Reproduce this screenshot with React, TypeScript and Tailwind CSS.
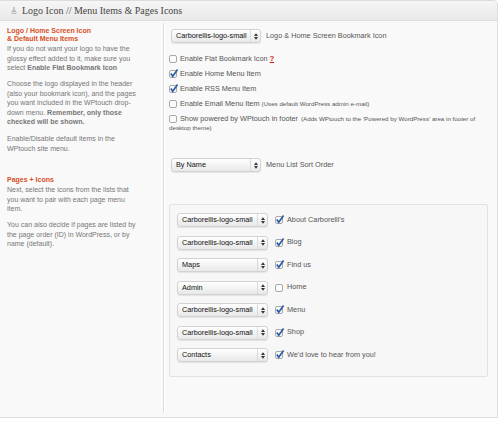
import React from "react";

function Select({ value, className }: { value: string; className: string }) {
  return (
    <div
      className={
        "flex h-[14px] shrink-0 items-center rounded-[3px] border border-[#d2d2d2] bg-linear-to-b from-white to-[#e8e8e8] shadow-[0_1px_1px_rgba(0,0,0,0.08)] " +
        className
      }
    >
      <span className="flex-1 truncate pl-[4px] text-[7.3px] leading-none text-[#111]">{value}</span>
      <span className="flex h-full w-[10px] items-center justify-center border-l border-[#dadada]">
        <svg width="4" height="7" viewBox="0 0 4 7">
          <path d="M0 3 L2 0.3 L4 3 Z M0 4 L2 6.7 L4 4 Z" fill="#333" />
        </svg>
      </span>
    </div>
  );
}

function Check({ on }: { on?: boolean }) {
  return (
    <svg width="10" height="10" viewBox="0 0 10 10" className="inline-block shrink-0 align-[-2px]">
      <rect x="0.5" y="1.5" width="7" height="7" rx="1.5" fill="#fbfbfb" stroke="#a9a9a9" />
      {on && <path d="M1.8 4.6 L3.7 7.2 L8.6 0.6" fill="none" stroke="#2c5da8" strokeWidth="1.7" />}
    </svg>
  );
}

const pages: [string, boolean, string][] = [
  ["Carborellis-logo-small", true, "About Carborelli's"],
  ["Carborellis-logo-small", true, "Blog"],
  ["Maps", true, "Find us"],
  ["Admin", false, "Home"],
  ["Carborellis-logo-small", true, "Menu"],
  ["Carborellis-logo-small", true, "Shop"],
  ["Contacts", true, "We'd love to hear from you!"],
];

export default function App() {
  return (
    <div className="h-[423px] w-[500px] overflow-hidden bg-white font-['Liberation_Sans',Arial,sans-serif]">
      <div className="flex h-[418px] w-[498px] flex-col rounded-tr-[5px] border-t border-r border-b border-[#dcdcdc] bg-[#f9f9f9]">
        {/* Header */}
        <div className="flex h-[20px] shrink-0 items-center gap-[5px] rounded-tr-[5px] border-b border-[#dfdfdf] bg-linear-to-b from-[#f6f6f6] to-[#e9e9e9] pl-[11px]">
          <svg width="6" height="7" viewBox="0 0 6 7">
            <path d="M2.3 0 h1.4 v2.6 L5.6 5 Q6 7 3 7 Q0 7 0.4 5 L2.3 2.6 Z" fill="#b9b9b9" />
            <rect x="1.4" y="5" width="3.2" height="1" fill="#efefef" />
          </svg>
          <span className="font-['Liberation_Serif',Georgia,serif] text-[10px] text-[#464646]">
            Logo Icon // Menu Items &amp; Pages Icons
          </span>
        </div>

        <div className="flex flex-1">
          {/* Left column */}
          <div className="mt-[2px] mb-[4px] w-[164px] shrink-0 whitespace-nowrap border-r border-[#dcdcdc] pt-[4px] pl-[7px] text-[7px] leading-[9.5px] text-[#777] shadow-[1px_0_0_#fff]">
            <div className="font-bold leading-[7.5px] text-[#d8501f]">
              Logo / Home Screen Icon
              <br />& Default Menu Items
            </div>
            <p className="mt-[2px]">
              If you do not want your logo to have the
              <br />
              glossy effect added to it, make sure you
              <br />
              select <b>Enable Flat Bookmark Icon</b>
            </p>
            <p className="mt-[6.5px]">
              Choose the logo displayed in the header
              <br />
              (also your bookmark icon), and the pages
              <br />
              you want included in the WPtouch drop-
              <br />
              down menu. <b>Remember, only those</b>
              <br />
              <b>checked will be shown.</b>
            </p>
            <p className="mt-[7.5px]">
              Enable/Disable default items in the
              <br />
              WPtouch site menu.
            </p>
            <div className="mt-[23px] font-bold leading-[7.5px] text-[#d8501f]">Pages + Icons</div>
            <p className="mt-[1.5px]">
              Next, select the icons from the lists that
              <br />
              you want to pair with each page menu
              <br />
              item.
            </p>
            <p className="mt-[6.5px]">
              You can also decide if pages are listed by
              <br />
              the page order (ID) in WordPress, or by
              <br />
              name (default).
            </p>
          </div>

          {/* Right column */}
          <div className="flex flex-1 flex-col pt-[8px] pl-[5px] text-[7.3px] text-[#555]">
            <div className="ml-[2px] flex items-center gap-[5px]">
              <Select value="Carborellis-logo-small" className="w-[90px]" />
              <span>Logo &amp; Home Screen Bookmark Icon</span>
            </div>

            <div className="mt-[8px] w-[312px] leading-[15px]">
              <div className="flex items-center gap-[1px]">
                <Check />
                <span>
                  Enable Flat Bookmark Icon <b className="text-[#e01010] underline">?</b>
                </span>
              </div>
              <div className="flex items-center gap-[1px]">
                <Check on />
                <span>Enable Home Menu Item</span>
              </div>
              <div className="flex items-center gap-[1px]">
                <Check on />
                <span>Enable RSS Menu Item</span>
              </div>
              <div className="flex items-center gap-[1px]">
                <Check />
                <span>
                  Enable Email Menu Item{" "}
                  <span className="text-[6.2px]">(Uses default WordPress admin e-mail)</span>
                </span>
              </div>
              <div className="mt-[3px] whitespace-nowrap">
                <div className="flex h-[9px] items-center gap-[1px]">
                  <Check />
                  <span>Show powered by WPtouch in footer</span>
                  <span className="ml-[2px] text-[6.2px]">
                    (Adds WPtouch to the 'Powered by WordPress' area in footer of
                  </span>
                </div>
                <div className="h-[9px] text-[6.2px] leading-[9px]">desktop theme)</div>
              </div>
            </div>

            <div className="mt-[26px] ml-[2px] flex items-center gap-[5px]">
              <Select value="By Name" className="w-[90px]" />
              <span>Menu List Sort Order</span>
            </div>

            <div className="mt-[32px] mr-[9px] flex flex-col gap-[8.5px] rounded-[2px] border border-[#e2e2e2] bg-[#f7f7f7] pt-[8px] pb-[13.5px] pl-[7px]">
              {pages.map(([icon, on, label], i) => (
                <div key={i} className="flex items-center">
                  <Select value={icon} className="w-[91px]" />
                  <span className="ml-[7px] mr-[2px] flex">
                    <Check on={on} />
                  </span>
                  <span>{label}</span>
                </div>
              ))}
            </div>
          </div>
        </div>
      </div>
    </div>
  );
}
